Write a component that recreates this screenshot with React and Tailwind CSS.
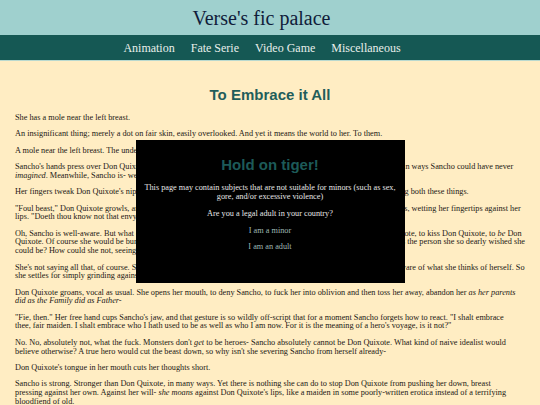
import React from 'react'

const serif = { fontFamily: '"Liberation Serif", "Times New Roman", serif' }

const navItems = ['Animation', 'Fate Serie', 'Video Game', 'Miscellaneous']

function Header() {
  return (
    <header>
      <div className="flex h-[35px] items-center justify-center bg-[#9fd0ce] pr-[17px]">
        <h1 className="text-[20px] leading-none text-[#101c3a]">Verse's fic palace</h1>
      </div>
      <nav className="flex h-[26px] items-center justify-center border-b border-[#b9d9cf] bg-[#155854]">
        {navItems.map((item) => (
          <a key={item} href="#" className="mr-4 text-[12px] leading-none text-[#e8efeb]">
            {item}
          </a>
        ))}
      </nav>
    </header>
  )
}

function AgeGate() {
  return (
    <div className="fixed inset-x-0 top-[140px] flex justify-center">
      <div className="h-[143px] w-[269px] bg-black px-[5px] pt-[16px] text-center text-[8.25px] leading-[9px] text-[#e6e6e6]">
        <h2 className="font-['Liberation_Sans',Arial,sans-serif] text-[15px] font-bold leading-[17px] text-[#1d5a58]">
          Hold on tiger!
        </h2>
        <p className="mt-[10px]">
          This page may contain subjects that are not suitable for minors (such as sex, gore, and/or excessive violence)
        </p>
        <p className="mt-[8px]">Are you a legal adult in your country?</p>
        <p className="mt-[8px]">
          <a href="#" className="text-[#9fb8b4]">I am a minor</a>
        </p>
        <p className="mt-[7px]">
          <a href="#" className="text-[#9fb8b4]">I am an adult</a>
        </p>
      </div>
    </div>
  )
}

export default function App() {
  return (
    <div className="min-h-screen bg-[#ffedc3]" style={serif}>
      <Header />
      <main>
        <h2 className="mt-[25px] text-center font-['Liberation_Sans',Arial,sans-serif] text-[15px] font-bold leading-[17px] text-[#1f5e5b]">
          To Embrace it All
        </h2>
        {/* line breaks follow the original page's column width */}
        <div className="mt-[11px] flex flex-col gap-[7.7px] pl-[15px] pr-[4px] text-[8.25px] leading-[8.7px] text-[#1c1814]">
          <p>She has a mole near the left breast.</p>
          <p>An insignificant thing; merely a dot on fair skin, easily overlooked. And yet it means the world to her. To them.</p>
          <p>A mole near the left breast. The understated mark of a monster.</p>
          <p>
            Sancho's hands press over Don Quixote's chest, tracing the curve of her breast, the mole beneath, and she is beautiful in ways Sancho could have never
            <br />
            <em>imagined</em>. Meanwhile, Sancho is- well, Sancho is what she is.
          </p>
          <p>
            Her fingers tweak Don Quixote's nipples, and the knight gasps sharply, torn somewhere between resenting and wanting both these things.
          </p>
          <p>
            "Foul beast," Don Quixote growls, and she grabs Sancho's hand and brings it up to her mouth, sucking on her knuckles, wetting her fingertips against her
            <br />
            lips. "Doeth thou know not that envy is a sin?"
          </p>
          <p>
            Oh, Sancho is well-aware. But what else is there for her to do? She really wants nothing more than to touch Don Quixote, to kiss Don Quixote, to <em>be</em> Don
            <br />
            Quixote. Of course she would be burning with envy, when Don Quixote is everything she is not, when Don Quixote is the person she so dearly wished she
            <br />
            could be? How could she not, seeing her like this?
          </p>
          <p>
            She's not saying all that, of course. She knows very well what Don Quixote thinks of her, because Sancho is all too aware of what she thinks of herself. So
            <br />
            she settles for simply grinding against Don Quixote's hand, shoving a hand down to brush the fixer's clit. "Silence."
          </p>
          <p>
            Don Quixote groans, vocal as usual. She opens her mouth, to deny Sancho, to fuck her into oblivion and then toss her away, abandon her <em>as her parents</em>
            <br />
            <em>did as the Family did as Father-</em>
          </p>
          <p>
            "Fie, then." Her free hand cups Sancho's jaw, and that gesture is so wildly off-script that for a moment Sancho forgets how to react. "I shalt embrace
            <br />
            thee, fair maiden. I shalt embrace who I hath used to be as well as who I am now. For it is the meaning of a hero's voyage, is it not?"
          </p>
          <p>
            No. No, absolutely not, what the fuck. Monsters don't <em>get</em> to be heroes- Sancho absolutely cannot be Don Quixote. What kind of naive idealist would
            <br />
            believe otherwise? A true hero would cut the beast down, so why isn't she severing Sancho from herself already-
          </p>
          <p>Don Quixote's tongue in her mouth cuts her thoughts short.</p>
          <p>
            Sancho is strong. Stronger than Don Quixote, in many ways. Yet there is nothing she can do to stop Don Quixote from pushing her down, breast
            <br />
            pressing against her own. Against her will- <em>she moans</em> against Don Quixote's lips, like a maiden in some poorly-written erotica instead of a terrifying
            <br />
            bloodfiend of old.
          </p>
        </div>
      </main>
      <AgeGate />
    </div>
  )
}
